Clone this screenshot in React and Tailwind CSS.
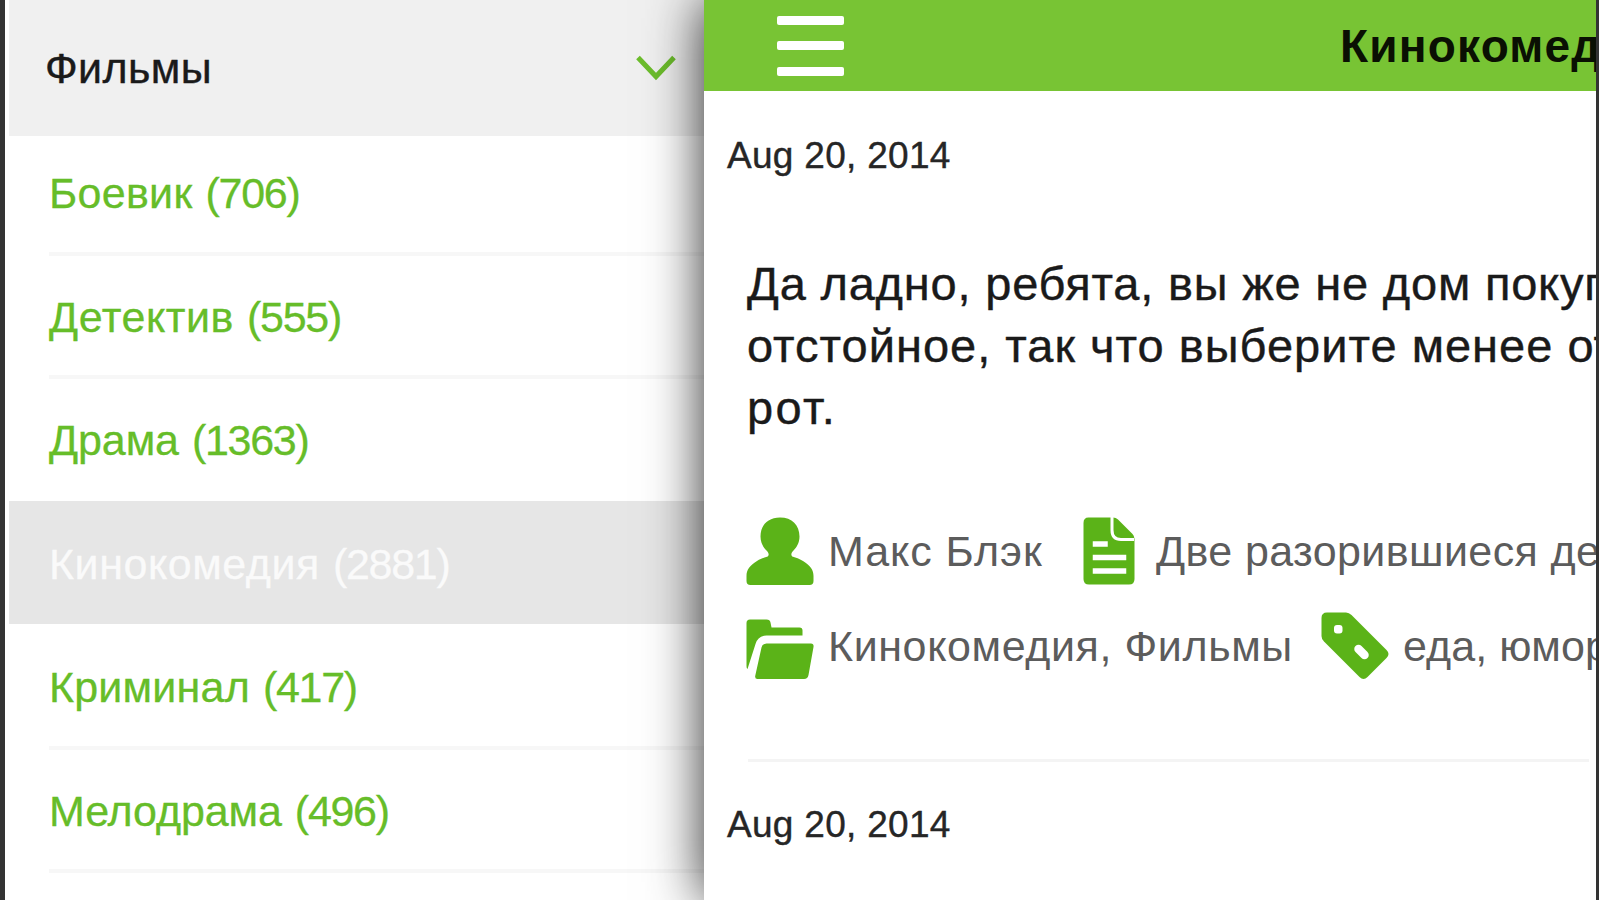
import { clsx } from 'clsx';

const CATEGORIES = [
  { name: 'Боевик', count: 706, spacing: 'tracking-[0.3px]' },
  { name: 'Детектив', count: 555, spacing: 'tracking-[0.55px]' },
  { name: 'Драма', count: 1363, spacing: 'tracking-[-0.1px]', last: true },
  { name: 'Кинокомедия', count: 2881, spacing: 'tracking-[0.55px]', active: true },
  { name: 'Криминал', count: 417, spacing: 'tracking-[0.2px]' },
  { name: 'Мелодрама', count: 496, spacing: 'tracking-[-0.1px]' },
];

// ─── Icons ───────────────────────────────────────────────────────
function UserIcon() {
  return (
    <svg className="w-[68px] h-[68px] shrink-0" viewBox="0 0 68 68" fill="#5bb318">
      <path d="M34 .5C46 .5 53.500 8 53.500 19.500C53.500 26 50.500 30.500 47.500 33.500C45 36 44.500 38.500 47 39.800C50 41 53 41.500 57 44C64.500 48.500 67.500 53 67.500 59V64Q67.500 68 63.500 68H4.500Q.5 68 .5 64V59C.5 53 3.500 48.500 11 44C15 41.500 18 41 21 39.800C23.500 38.500 23 36 20.500 33.500C17.500 30.500 14.500 26 14.500 19.500C14.500 8 22 .5 34 .5Z" />
    </svg>
  );
}

function FileIcon() {
  return (
    <svg className="w-[52px] h-[68px] shrink-0" viewBox="0 0 52 68" fill="none">
      <path d="M5.500 .5H30Q33 .5 35 2.500L49.500 17Q51.500 19 51.500 22V62Q51.500 67.500 46 67.500H6Q.5 67.500 .5 62V6Q.5 .5 5.500 .5Z" fill="#5bb318" />
      <path d="M29 0V13Q29 22.500 38 22.500H51" stroke="#fff" strokeWidth="3" />
      <path d="M12.500 27H22M12.500 40.500H40.500M12.500 54H40.500" stroke="#fff" strokeWidth="5.500" strokeLinecap="square" />
    </svg>
  );
}

function FolderIcon() {
  return (
    <svg className="w-[68px] h-[62px] shrink-0" viewBox="0 0 68 62" fill="#5bb318">
      <path d="M4 1.500H20.500Q24 1.500 24.500 4.500L25.500 9.500H53.500Q56.500 9.500 56.500 12.500V17.500H20.500Q12 17.500 9.500 26L1.500 51Q.5 51 .5 48V5Q.5 1.500 4 1.500Z" />
      <path d="M20.500 25.500H65Q68 25.500 67.500 29L62.500 57Q61.800 61 58 61H11.500Q8.500 61 9.300 57.500L15.500 29.500Q16.500 25.500 20.500 25.500Z" />
    </svg>
  );
}

function TagIcon() {
  return (
    <svg className="w-[68px] h-[68px] shrink-0" viewBox="0 0 68 68">
      <path d="M6 .5H25Q28 .5 30.500 3L65.500 38Q69.500 42 65.500 46L46.500 65Q42.500 69 38.500 65L3 29.500Q.5 27 .5 24V6Q.5 .5 6 .5Z" fill="#5bb318" />
      <rect x="13" y="13" width="8.500" height="8.500" rx="3" fill="#fff" />
      <path d="M37.500 37L43.500 43" stroke="#fff" strokeWidth="8.500" strokeLinecap="round" />
    </svg>
  );
}

// ─── Sidebar ─────────────────────────────────────────────────────
function Sidebar() {
  return (
    <aside className="w-[699px] shrink-0 flex flex-col pl-[4px]">
      <div className="relative z-10 h-[136px] shrink-0 flex items-center justify-between bg-[#f0f0f0] pl-[36px] pr-[28px]">
        <span className="text-[43px] leading-[60px] text-[#1a1a1a] tracking-[0.4px] [-webkit-text-stroke:0.4px]">Фильмы</span>
        <svg className="w-[40px] h-[26px]" viewBox="0 0 40 26" fill="none" stroke="#6cbd2c" strokeWidth="5">
          <path d="M2 2.500L20 21.500L38 2.500" />
        </svg>
      </div>
      <ul className="-mt-[6px]">
        {CATEGORIES.map(c => (
          <li key={c.name} className={clsx('h-[123.5px] pl-[40px] text-[43px]', c.active ? 'bg-[#e6e6e6] text-[#fafafa]' : 'text-[#66bd29]')}>
            <div className={clsx(
              'h-full flex items-center pt-[5px] whitespace-nowrap border-b-2 [-webkit-text-stroke:0.3px]',
              c.last || c.active ? 'border-transparent' : 'border-[#f7f7f7] shadow-[0_2px_0_#f7f7f7]',
            )}>
              <span className={c.spacing}>{c.name}</span>
              <span className="ml-[13px] tracking-[-1.3px]">({c.count})</span>
            </div>
          </li>
        ))}
      </ul>
    </aside>
  );
}

// ─── Feed ────────────────────────────────────────────────────────
function PostDate({ children }) {
  return <div className="text-[37px] leading-[44px] tracking-[0.3px] text-[#262626] whitespace-nowrap [-webkit-text-stroke:0.4px]">{children}</div>;
}

function Feed() {
  return (
    <main className="relative z-20 flex-1 min-w-0 flex flex-col bg-white shadow-[0_0_52px_rgba(0,0,0,0.84)]">
      <header className="h-[91px] shrink-0 flex items-center bg-[#78c434] pl-[73px] overflow-hidden">
        <div className="w-[67px] h-[60px] shrink-0 flex flex-col justify-between">
          <div className="h-[9px] rounded-[2px] bg-white" />
          <div className="h-[9px] rounded-[2px] bg-white" />
          <div className="h-[9px] rounded-[2px] bg-white" />
        </div>
        <h1 className="ml-[496px] text-[46px] leading-[60px] tracking-[1.2px] font-bold text-[#0a1003] whitespace-nowrap">Кинокомед</h1>
      </header>

      <article className="pl-[23px] pt-[43px]">
        <PostDate>Aug 20, 2014</PostDate>
        <div className="pl-[19px] pt-[75px]">
          <p className="pl-px text-[47px] leading-[62px] text-[#1a1a1a] whitespace-nowrap [-webkit-text-stroke:0.4px]">
            <span className="block tracking-[0.8px]">Да ладно, ребята, вы же не дом покуп</span>
            <span className="block tracking-[1px]">отстойное, так что выберите менее от</span>
            <span className="block tracking-[2.4px]">рот.</span>
          </p>
          <div className="mt-[78px] h-[68px] flex items-center text-[43px] text-[#5c5c5c] whitespace-nowrap">
            <UserIcon />
            <span className="ml-[14px] w-[255px] shrink-0 tracking-[0.9px]">Макс Блэк</span>
            <FileIcon />
            <span className="ml-[21px] tracking-[0.4px]">Две разорившиеся де</span>
          </div>
          <div className="mt-[27px] h-[68px] flex items-center text-[43px] text-[#5c5c5c] whitespace-nowrap">
            <div className="pt-[6px] shrink-0"><FolderIcon /></div>
            <span className="ml-[14px] w-[493px] shrink-0 tracking-[0.6px]">Кинокомедия, Фильмы</span>
            <TagIcon />
            <span className="ml-[14px] tracking-[0.1px]">еда, юмор</span>
          </div>
          <div className="mt-[79px] mr-[7px] ml-[2px] h-[3px] bg-[#f4f4f4]" />
        </div>
      </article>

      <article className="pl-[23px] pt-[41px]">
        <PostDate>Aug 20, 2014</PostDate>
      </article>
    </main>
  );
}

export default function App() {
  return (
    <div className="flex w-[1599px] h-[900px] overflow-hidden bg-white border-l-[5px] border-r-[3px] border-[#333333] font-['Liberation_Sans',Arial,sans-serif]">
      <Sidebar />
      <Feed />
    </div>
  );
}
